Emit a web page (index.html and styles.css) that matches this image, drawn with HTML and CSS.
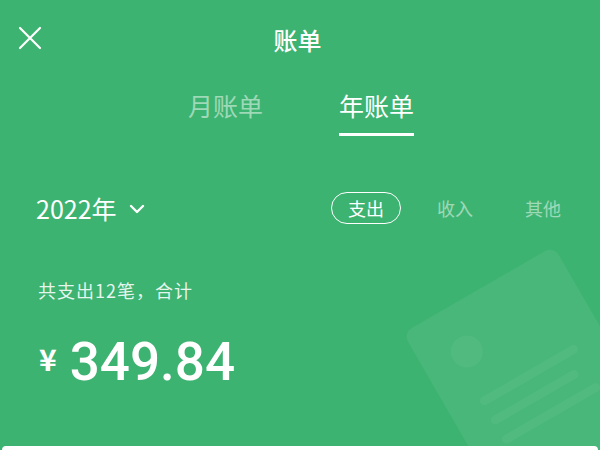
FILE: index.html
```html
<!DOCTYPE html>
<html lang="zh-CN">
<head>
<meta charset="utf-8">
<link rel="stylesheet" href="styles.css">
</head>
<body>
<div class="page">
  <svg class="deco" width="600" height="450" viewBox="0 0 600 450" aria-hidden="true">
    <g transform="translate(403,333) rotate(-30)">
      <rect x="0" y="0" width="174" height="260" rx="10" fill="rgba(255,255,255,0.06)"/>
      <circle cx="46" cy="48" r="16" fill="rgba(255,255,255,0.05)"/>
      <rect x="32" y="95" width="112" height="9" rx="4.5" fill="rgba(255,255,255,0.05)"/>
      <rect x="32" y="117" width="100" height="9" rx="4.5" fill="rgba(255,255,255,0.05)"/>
      <rect x="32" y="139" width="112" height="9" rx="4.5" fill="rgba(255,255,255,0.05)"/>
    </g>
  </svg>
  <header class="topbar">
    <svg class="close" width="24" height="24" viewBox="0 0 24 24">
      <path d="M2 2 L22 22 M22 2 L2 22" stroke="#fff" stroke-width="2.2" stroke-linecap="round" fill="none"/>
    </svg>
    <h1 class="title">账单</h1>
  </header>
  <nav class="tabs">
    <span class="tab">月账单</span>
    <span class="tab active">年账单</span>
  </nav>
  <div class="filter">
    <div class="year">2022年
      <svg class="chev" width="16" height="10" viewBox="0 0 16 10">
        <path d="M2 2 L8 8 L14 2" stroke="#fff" stroke-width="2.4" stroke-linecap="round" stroke-linejoin="round" fill="none"/>
      </svg>
    </div>
    <div class="types">
      <span class="type active">支出</span>
      <span class="type">收入</span>
      <span class="type">其他</span>
    </div>
  </div>
  <p class="summary">共支出12笔，合计</p>
  <div class="amount"><span class="yen">¥</span><span class="num">349.84</span></div>
  <div class="spacer"></div>
  <div class="card"></div>
</div>
</body>
</html>
```
FILE: styles.css
```css
* { box-sizing: border-box; }
html, body { margin: 0; padding: 0; }
body {
  font-family: "Noto Sans CJK SC", "Noto Sans", sans-serif;
  color: #fff;
}
.page {
  position: relative;
  width: 600px;
  height: 450px;
  overflow: hidden;
  background: #3db371;
  display: flex;
  flex-direction: column;
}
.deco {
  position: absolute;
  left: 0;
  top: 0;
}
.topbar {
  position: relative;
  height: 80px;
  display: flex;
  align-items: center;
  justify-content: center;
  padding-right: 5px;
}
.close {
  position: absolute;
  left: 18px;
  top: 26px;
}
.title {
  margin: 0;
  font-size: 24px;
  font-weight: 500;
  line-height: 1;
}
.tabs {
  display: flex;
  justify-content: center;
  gap: 76px;
  height: 66px;
  padding-top: 10px;
  padding-left: 2px;
}
.tab {
  font-size: 25px;
  line-height: 1.2;
  height: 46px;
  color: rgba(255,255,255,0.5);
  border-bottom: 3px solid transparent;
}
.tab.active {
  color: #fff;
  border-bottom-color: #fff;
}
.filter {
  display: flex;
  align-items: center;
  justify-content: space-between;
  height: 64px;
  margin-top: 30px;
  padding: 0 38px 0 36px;
}
.year {
  display: flex;
  align-items: center;
  gap: 12px;
  font-size: 25px;
}
.chev { margin-top: 2px; }
.types {
  display: flex;
  align-items: center;
  margin-right: 1px;
}
.type {
  font-size: 18px;
  color: rgba(255,255,255,0.5);
}
.type + .type { margin-left: 52px; }
.type.active + .type { margin-left: 36px; }
.type.active {
  color: #fff;
  border: 1.5px solid #fff;
  border-radius: 17px;
  padding: 2px 16px;
}
.summary {
  margin: 41px 0 0;
  padding-left: 38px;
  font-size: 18px;
  letter-spacing: 1px;
  line-height: 1;
  color: rgba(255,255,255,0.88);
}
.amount {
  display: flex;
  align-items: flex-start;
  padding: 37px 0 0 39px;
}
.yen {
  font-size: 30px;
  font-weight: 700;
  line-height: 1;
  margin-top: 7px;
  margin-right: 13px;
}
.num {
  font-family: Roboto, "Noto Sans", sans-serif;
  font-size: 53px;
  font-weight: 500;
  line-height: 1;
}
.spacer { flex: 1; }
.card {
  height: 4px;
  margin: 0 2px;
  background: #fff;
  border-radius: 10px 10px 0 0;
}
```
